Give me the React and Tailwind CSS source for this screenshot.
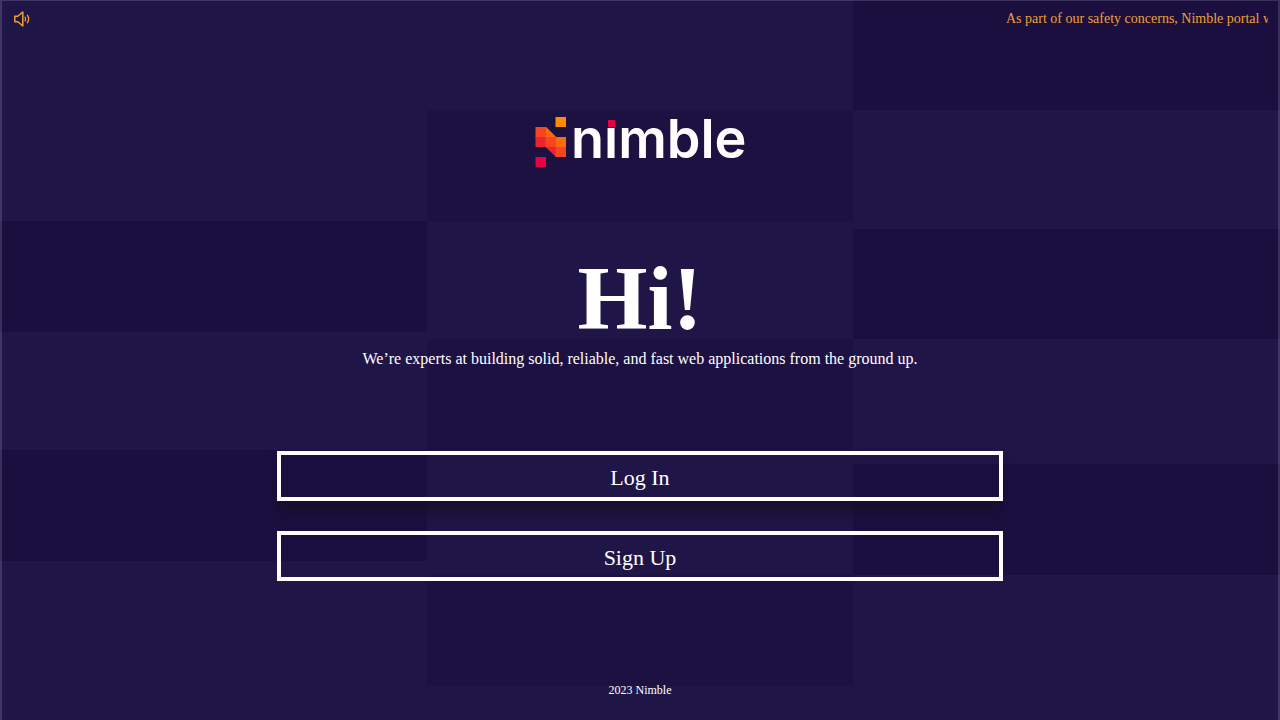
const columns = [
  [
    ["bg-[#201547]", 221],
    ["bg-[#1b0f40]", 111],
    ["bg-[#201547]", 118],
    ["bg-[#1b0f40]", 111],
    ["bg-[#201547]", 159],
  ],
  [
    ["bg-[#201547]", 110],
    ["bg-[#1d1142]", 112],
    ["bg-[#201547]", 117],
    ["bg-[#1d1142]", 111],
    ["bg-[#201547]", 125],
    ["bg-[#1d1142]", 111],
    ["bg-[#201547]", 34],
  ],
  [
    ["bg-[#1b0f40]", 110],
    ["bg-[#201547]", 119],
    ["bg-[#1b0f40]", 110],
    ["bg-[#201547]", 125],
    ["bg-[#1b0f40]", 111],
    ["bg-[#201547]", 145],
  ],
];

function Backdrop() {
  return (
    <div aria-hidden="true" className="absolute inset-0 -z-10 grid grid-cols-3">
      {columns.map((tiles, column) => (
        <div key={column} className="flex flex-col">
          {tiles.map(([color, share], row) => (
            <div key={row} className={`basis-0 ${color}`} style={{ flexGrow: share }} />
          ))}
        </div>
      ))}
      <div className="absolute inset-0 border-x-2 border-t border-[#ffffff24]" />
    </div>
  );
}

function SpeakerIcon() {
  return (
    <svg
      width="18"
      height="18"
      viewBox="0 0 18 18"
      fill="none"
      stroke="currentColor"
      strokeWidth="1.5"
      strokeLinejoin="round"
      strokeLinecap="round"
      aria-hidden="true"
    >
      <path d="M1.8 6.2h3L9.8 2v14l-5-4.2h-3z" />
      <path d="M12 7.2q1.4 1.8 0 3.6M14.3 5.2q2.8 3.8 0 7.6" strokeWidth="1.3" />
    </svg>
  );
}

function Logo() {
  return (
    <svg
      width="212"
      height="54"
      viewBox="0 0 212 54"
      role="img"
      aria-label="nimble"
      className="overflow-visible"
    >
      <path d="M21.5 2H32v10H21.5z" fill="#ff8b00" />
      <path d="M1.5 12H12l10 10v1H1.5z" fill="#f54522" />
      <path d="M1.5 22H12v10H1.5z" fill="#ec2330" />
      <path d="M12 12l10 10H32v10H21.5L12 22z" fill="#ff690d" />
      <path d="M11.5 22H22v10H11.5z" fill="#f54522" />
      <path d="M11.5 32H22v10z" fill="#ec2330" />
      <path d="M21.5 32H32v10H21.5z" fill="#f54522" />
      <path d="M1.5 42H12v10H1.5z" fill="#e6003f" />
      <text
        x="37"
        y="43"
        fill="#fff"
        fontSize="54"
        className="font-['Inter',sans-serif] font-semibold"
      >
        nimble
      </text>
      <path d="M71 1h13v11H71z" fill="#1d1142" />
      <path d="M74 5h7v7h-7z" fill="#e6003f" />
    </svg>
  );
}

export default function App() {
  return (
    <div className="relative isolate flex min-h-screen flex-col bg-[#201547] px-3 font-['Liberation_Serif',serif] text-white">
      <Backdrop />
      <header className="flex h-[38px] items-center justify-between text-[#f0a030]">
        <button type="button" aria-label="Announcements" className="pl-px">
          <SpeakerIcon />
        </button>
        <p className="w-[262px] overflow-hidden text-sm whitespace-nowrap">
          As part of our safety concerns, Nimble portal will
        </p>
      </header>

      <main className="mx-auto flex w-full max-w-[726px] flex-col items-center pt-[77px]">
        <Logo />
        <h1 className="mt-[82px] text-[90px] leading-24 font-bold">Hi!</h1>
        <p className="text-center text-base">
          We’re experts at building solid, reliable, and fast web applications from the ground up.
        </p>
        <div className="mt-20 flex w-full flex-col gap-[30px] text-[22px]">
          <button
            type="button"
            className="h-[50px] border-4 border-white pt-0.5 shadow-[0_12px_12px_-2px_rgba(20,16,38,0.85)]"
          >
            Log In
          </button>
          <button type="button" className="h-[50px] border-4 border-white pt-0.5">
            Sign Up
          </button>
        </div>
      </main>

      <footer className="mt-auto pb-[22px] text-center text-xs">2023 Nimble</footer>
    </div>
  );
}
